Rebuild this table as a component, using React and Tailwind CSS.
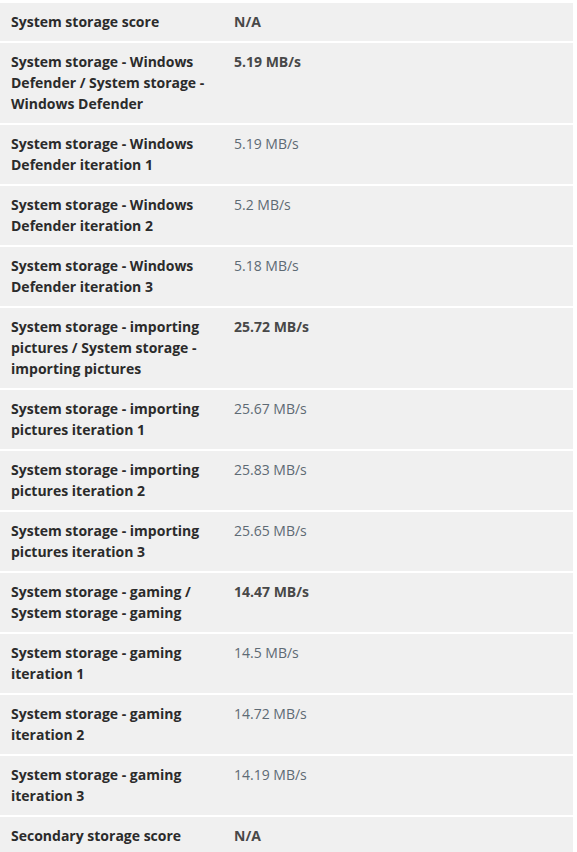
const rows = [
  ["System storage score", "N/A", true],
  ["System storage - Windows Defender / System storage - Windows Defender", "5.19 MB/s", true],
  ["System storage - Windows Defender iteration 1", "5.19 MB/s", false],
  ["System storage - Windows Defender iteration 2", "5.2 MB/s", false],
  ["System storage - Windows Defender iteration 3", "5.18 MB/s", false],
  ["System storage - importing pictures / System storage - importing pictures", "25.72 MB/s", true],
  ["System storage - importing pictures iteration 1", "25.67 MB/s", false],
  ["System storage - importing pictures iteration 2", "25.83 MB/s", false],
  ["System storage - importing pictures iteration 3", "25.65 MB/s", false],
  ["System storage - gaming / System storage - gaming", "14.47 MB/s", true],
  ["System storage - gaming iteration 1", "14.5 MB/s", false],
  ["System storage - gaming iteration 2", "14.72 MB/s", false],
  ["System storage - gaming iteration 3", "14.19 MB/s", false],
  ["Secondary storage score", "N/A", true],
]

export default function App() {
  return (
    <div className="bg-white w-[577px] h-[852px] overflow-hidden pt-[3px] pr-[4px] font-['Open_Sans',sans-serif] text-[14px] leading-[21px]">
      <div className="flex flex-col gap-[2px]">
        {rows.map(([label, value, bold], i) => (
          <div key={i} className="flex bg-[#f0f0f0] pt-[8px] pb-[9px]">
            <div className="w-[234px] shrink-0 pl-[11px] pr-[11px] font-bold text-[#2b2b2b]">{label}</div>
            <div className={bold ? "font-bold text-[#484848]" : "text-[#5e6a74]"}>{value}</div>
          </div>
        ))}
      </div>
    </div>
  )
}
